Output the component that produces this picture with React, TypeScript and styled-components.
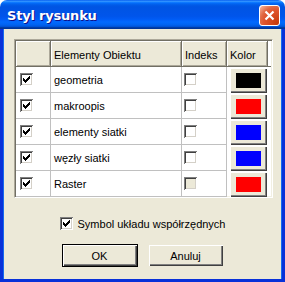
import styled, { createGlobalStyle } from 'styled-components'

const GlobalStyle = createGlobalStyle`
  html, body {
    margin: 0;
    padding: 0;
    background: #fff;
  }
  * {
    box-sizing: border-box;
  }
`

const FACE = '#ECE9D8'

const Window = styled.div`
  width: 285px;
  height: 282px;
  display: flex;
  flex-direction: column;
  font-family: 'Liberation Sans', Arial, sans-serif;
  font-size: 11px;
  color: #000;
`

const TitleBar = styled.div`
  height: 29px;
  flex: none;
  display: flex;
  align-items: center;
  justify-content: space-between;
  padding: 0 5px 0 7px;
  border-radius: 7px 7px 0 0;
  background: linear-gradient(
    to bottom,
    #0058ee 0%,
    #3593ff 4%,
    #288eff 6%,
    #127dff 8%,
    #036ffc 10%,
    #0262ee 14%,
    #0057e5 20%,
    #0054e3 24%,
    #0055eb 56%,
    #005bf5 66%,
    #026afe 76%,
    #0062ef 86%,
    #0052d6 92%,
    #0040ab 94%,
    #003092 100%
  );
`

const Title = styled.span`
  color: #fff;
  font-family: 'DejaVu Sans', 'Liberation Sans', sans-serif;
  font-weight: bold;
  font-size: 13px;
  letter-spacing: -0.2px;
  text-shadow: 1px 1px #0f1089;
  margin-top: 1px;
`

const CloseButton = styled.div`
  width: 21px;
  height: 21px;
  border: 1px solid #fff;
  border-radius: 3px;
  display: flex;
  align-items: center;
  justify-content: center;
  background: radial-gradient(
    circle at 90% 90%,
    #c73a0a 0%,
    #e0552e 55%,
    #e06a45 70%,
    #f3a58a 92%,
    #fff 100%
  );
  margin-top: 1px;
`

const Body = styled.div`
  flex: 1;
  display: flex;
  flex-direction: column;
  align-items: center;
  background: ${FACE};
  border: 3px solid #0831d9;
  border-top: none;
  box-shadow: inset 1px 0 #166aee, inset -1px 0 #166aee;
  padding-top: 10px;
`

const GridFrame = styled.div`
  width: 259px;
  height: 159px;
  align-self: flex-start;
  margin-left: 11px;
  border: 1px solid #aca899;
  border-right-color: #fff;
  border-bottom-color: #fff;
  box-shadow: inset 1px 1px #716f64, inset -1px -1px #f1efe2;
  padding: 1px;
  background: #fff;
`

const GridRow = styled.div`
  display: grid;
  grid-template-columns: 35px 131px 45px 41px 1fr;
  height: 26px;
`

const HeadCell = styled.div<{ $blank?: boolean }>`
  background: ${(p) => (p.$blank ? '#fff' : FACE)};
  border-right: ${(p) => (p.$blank ? 'none' : '1px solid #716f64')};
  border-bottom: 1px solid #716f64;
  box-shadow: ${(p) => (p.$blank ? 'none' : 'inset 1px 1px #fff, inset -1px -1px #aca899')};
  padding: 0 0 5px 3px;
  display: flex;
  align-items: flex-end;
  white-space: nowrap;
`

const Cell = styled.div<{ $pad?: number; $noline?: boolean }>`
  border-right: ${(p) => (p.$noline ? 'none' : '1px solid #c0c0c0')};
  border-bottom: ${(p) => (p.$noline ? 'none' : '1px solid #c0c0c0')};
  display: flex;
  align-items: center;
  padding-left: ${(p) => p.$pad ?? 0}px;
  white-space: nowrap;
`

const ColorCell = styled.div`
  display: flex;
  align-items: flex-start;
  padding: 1px 0 0 3px;
`

const Box = styled.div<{ $disabled?: boolean }>`
  width: 13px;
  height: 13px;
  flex: none;
  background: ${(p) => (p.$disabled ? FACE : '#fff')};
  box-shadow: inset 1px 1px #808080, inset -1px -1px #fff, inset 2px 2px #404040,
    inset -2px -2px #d4d0c8;
  display: flex;
  align-items: center;
  justify-content: center;
`

const ColorButton = styled.div`
  width: 37px;
  height: 25px;
  background: ${FACE};
  box-shadow: inset 1px 1px #fff, inset -1px -1px #404040, inset -2px -2px #808080;
  display: flex;
  align-items: center;
  justify-content: center;
  padding: 0 1px 1px 0;
`

const Swatch = styled.div<{ $color: string }>`
  width: 25px;
  height: 15px;
  background: ${(p) => p.$color};
`

const OptionRow = styled.label`
  display: flex;
  align-items: center;
  gap: 5px;
  margin-top: 19px;
  height: 13px;
`

const Buttons = styled.div`
  display: flex;
  gap: 10px;
  margin-top: 14px;
`

const Button = styled.div<{ $default?: boolean }>`
  width: 76px;
  height: 23px;
  display: flex;
  align-items: center;
  justify-content: center;
  background: ${FACE};
  border: 1px solid ${(p) => (p.$default ? '#000' : 'transparent')};
  box-shadow: inset 1px 1px #fff, inset -1px -1px #404040, inset -2px -2px #808080;
`

const Check = () => (
  <svg width="7" height="7" viewBox="0 0 7 7" shapeRendering="crispEdges">
    <rect x="6" y="0" width="1" height="1" fill="#000" />
    <rect x="5" y="1" width="2" height="1" fill="#000" />
    <rect x="0" y="2" width="1" height="1" fill="#000" />
    <rect x="4" y="2" width="3" height="1" fill="#000" />
    <rect x="0" y="3" width="2" height="1" fill="#000" />
    <rect x="3" y="3" width="3" height="1" fill="#000" />
    <rect x="0" y="4" width="5" height="1" fill="#000" />
    <rect x="1" y="5" width="3" height="1" fill="#000" />
    <rect x="2" y="6" width="1" height="1" fill="#000" />
  </svg>
)

const rows = [
  { name: 'geometria', color: '#000000' },
  { name: 'makroopis', color: '#ff0000' },
  { name: 'elementy siatki', color: '#0000ff' },
  { name: 'węzły siatki', color: '#0000ff' },
  { name: 'Raster', color: '#ff0000', disabled: true },
]

export default function App() {
  return (
    <>
      <GlobalStyle />
      <Window>
        <TitleBar>
          <Title>Styl rysunku</Title>
          <CloseButton>
            <svg width="11" height="11" viewBox="0 0 11 11">
              <path d="M1.5 1.5 L9.5 9.5 M9.5 1.5 L1.5 9.5" stroke="#fff" strokeWidth="2.2" />
            </svg>
          </CloseButton>
        </TitleBar>
        <Body>
          <GridFrame>
            <GridRow>
              <HeadCell />
              <HeadCell>Elementy Obiektu</HeadCell>
              <HeadCell>Indeks</HeadCell>
              <HeadCell>Kolor</HeadCell>
              <HeadCell $blank />
            </GridRow>
            {rows.map((r) => (
              <GridRow key={r.name}>
                <Cell $pad={4}>
                  <Box>
                    <Check />
                  </Box>
                </Cell>
                <Cell $pad={3}>{r.name}</Cell>
                <Cell $pad={2}>
                  <Box $disabled={r.disabled} />
                </Cell>
                <ColorCell>
                  <ColorButton>
                    <Swatch $color={r.color} />
                  </ColorButton>
                </ColorCell>
                <Cell $noline />
              </GridRow>
            ))}
          </GridFrame>
          <OptionRow>
            <Box>
              <Check />
            </Box>
            Symbol układu współrzędnych
          </OptionRow>
          <Buttons>
            <Button $default>OK</Button>
            <Button>Anuluj</Button>
          </Buttons>
        </Body>
      </Window>
    </>
  )
}
